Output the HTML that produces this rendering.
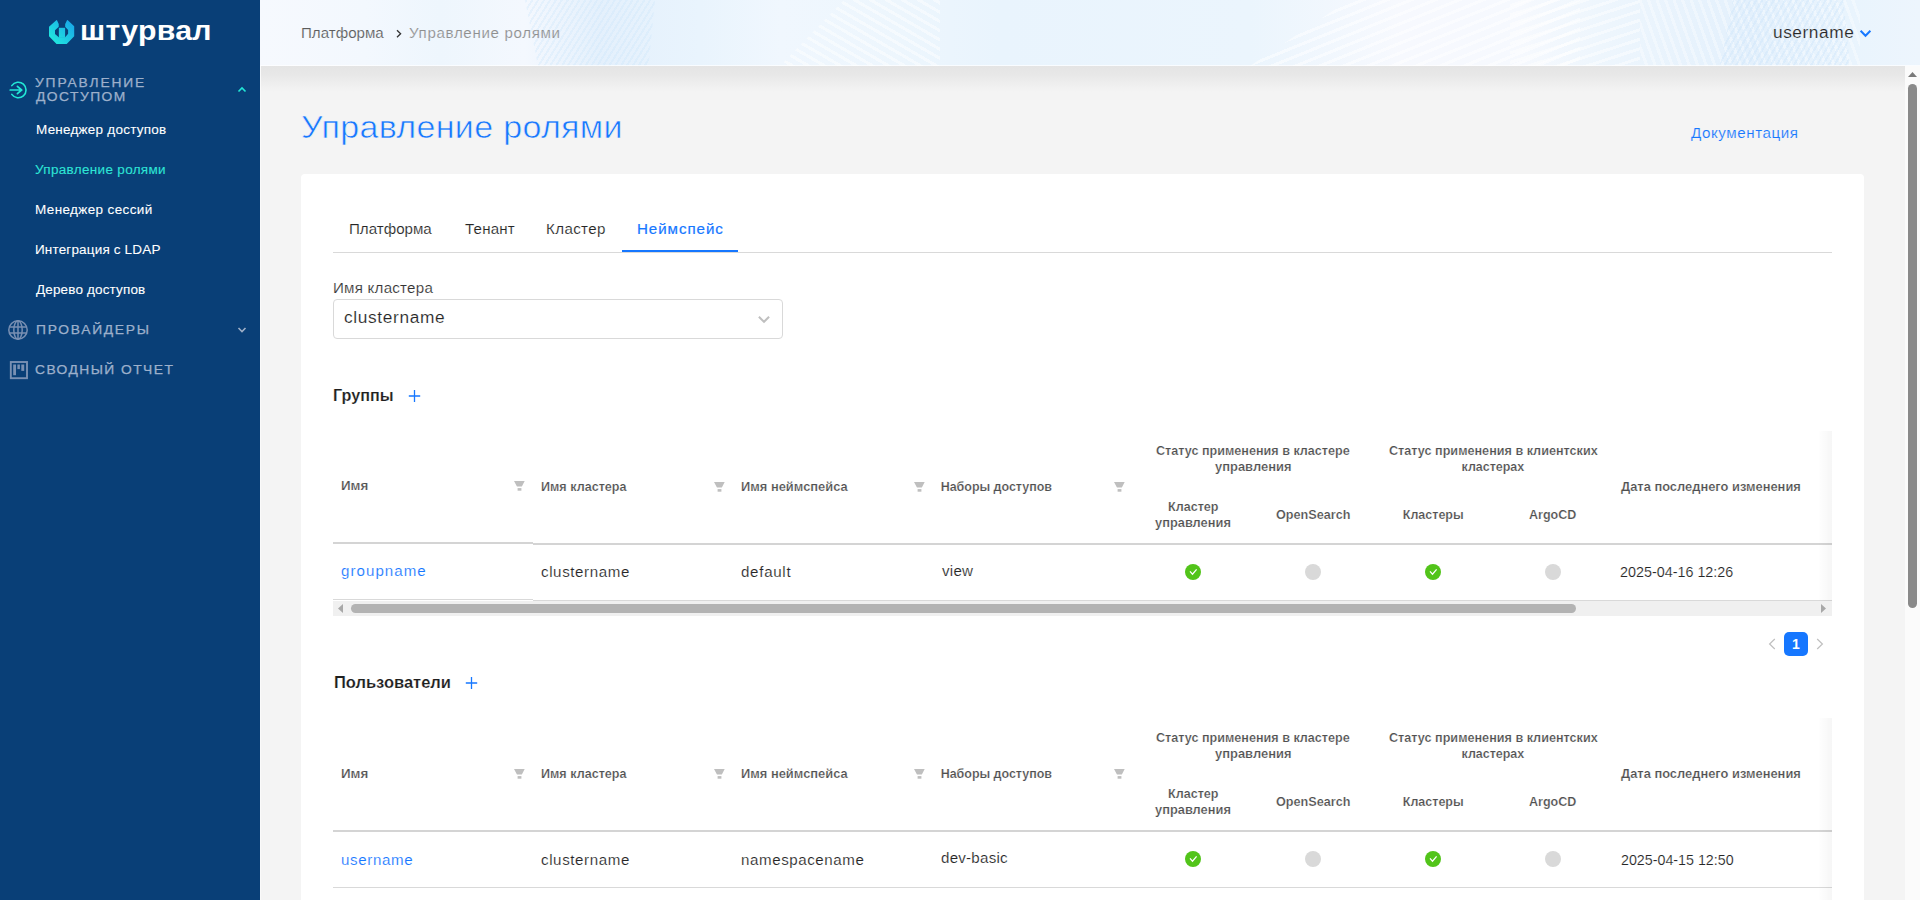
<!DOCTYPE html>
<html><head><meta charset="utf-8"><title>Управление ролями</title>
<style>
html,body{margin:0;padding:0;width:1920px;height:900px;overflow:hidden;background:#f4f4f4}
body{position:relative;font-family:"Liberation Sans",sans-serif}
.a{position:absolute}
.t{position:absolute;white-space:nowrap;line-height:1;transform-origin:0 0}
#side{position:absolute;left:0;top:0;width:260px;height:900px;background:#093f77}
#hdr{position:absolute;left:260px;top:0;width:1660px;height:66px;background:linear-gradient(90deg,#f4f9fe 0%,#eaf5fd 35%,#eef6fd 55%,#f6f9fe 72%,#ecf5fd 100%);overflow:hidden}
#shadow{position:absolute;left:260px;top:66px;width:1645px;height:26px;background:linear-gradient(#e4e4e4,#e8e8e8 35%,#f4f4f4)}
#card{position:absolute;left:301px;top:174px;width:1563px;height:760px;background:#fff;border-radius:4px}
#vs{position:absolute;left:1905px;top:66px;width:15px;height:834px;background:#fbfbfb}
</style></head><body>
<div id="side"></div>
<div id="hdr" style="background:linear-gradient(90deg,#f6f9fe 0.00%,#f3f8fe 6.33%,#eef6fd 10.84%,#f4f8fe 15.96%,#e4f0fc 20.48%,#e9f4fd 26.51%,#f0f7fe 31.33%,#edf6fd 38.55%,#e9f4fd 44.58%,#ebf5fd 59.64%,#f7f9fe 68.67%,#f6f9fe 75.90%,#eef6fd 80.72%,#e3f0fc 89.76%,#e9f4fd 95.78%,#edf5fd 100.00%)">
 <div class="a" style="left:265px;top:0;width:130px;height:66px;background:repeating-linear-gradient(-58deg,rgba(200,228,250,0) 0 3px,rgba(200,228,250,.30) 3px 5px);clip-path:polygon(0 0,100% 0,95% 100%,10% 100%)"></div>
 <div class="a" style="left:520px;top:0;width:160px;height:66px;background:repeating-linear-gradient(30deg,rgba(255,255,255,0) 0 5px,rgba(255,255,255,.45) 5px 8px);clip-path:polygon(40% 0,100% 0,100% 100%,0 100%)"></div>
 <div class="a" style="left:990px;top:0;width:330px;height:66px;background:repeating-linear-gradient(-22deg,rgba(255,255,255,0) 0 6px,rgba(255,255,255,.5) 6px 9px);clip-path:polygon(30% 0,100% 0,100% 100%,0 100%)"></div>
 <div class="a" style="left:1250px;top:0;width:130px;height:66px;background:repeating-linear-gradient(-18deg,rgba(255,255,255,0) 0 6px,rgba(255,255,255,.45) 6px 9px)"></div>
 <div class="a" style="left:1380px;top:0;width:220px;height:66px;background:repeating-linear-gradient(70deg,rgba(255,255,255,0) 0 5px,rgba(255,255,255,.35) 5px 8px)"></div>
 <div class="a" style="left:1460px;top:0;width:130px;height:66px;background:repeating-linear-gradient(-60deg,rgba(200,226,250,0) 0 3px,rgba(200,226,250,.35) 3px 5px);clip-path:polygon(10% 0,95% 0,100% 100%,0 100%)"></div>
</div>
<div id="shadow"></div>
<div class="a" style="left:260px;top:65px;width:1660px;height:1px;background:rgba(255,255,255,.7)"></div>
<div class="a" style="left:260px;top:66px;width:1px;height:834px;background:#fafafa"></div>
<div id="card"></div>
<div id="vs"></div>
<svg class="a" style="left:1907px;top:71px" width="11" height="7" viewBox="0 0 11 7"><path d="M1 6H10L5.5 1Z" fill="#7a7a7a"/></svg>
<div class="a" style="left:1908px;top:84px;width:9px;height:524px;border-radius:4.5px;background:#8a8a8a"></div>

<!-- logo -->
<svg class="a" style="left:49px;top:20px" width="26" height="24" viewBox="0 0 26 24">
<defs><linearGradient id="lg" gradientUnits="userSpaceOnUse" x1="0" y1="24" x2="25" y2="0"><stop offset="0" stop-color="#22f2dc"/><stop offset="1" stop-color="#18a0ea"/></linearGradient></defs>
<path d="M7.3 0.2Q7.6 -0.2 8 0.2L9.85 4.2V6.7H16.1V4.2L18 0.2Q18.4 -0.2 18.8 0.2L25.2 6.3V16.3L17.7 24H7.5L0 16.3V6.7Z" fill="url(#lg)"/>
<path d="M9.85 4.2H16.1V6.7L19.1 10V13.8L16.1 17.3H9.85L6 13.9V10.2L9.85 6.7Z" fill="#093f77"/>
<rect x="9.85" y="7.8" width="6.25" height="10" fill="url(#lg)"/>
</svg>
<!-- sidebar icons -->
<svg class="a" style="left:8px;top:80px" width="22" height="22" viewBox="0 0 22 22">
<path d="M3.8 5.6A7.8 7.8 0 1 1 3.8 14.4" stroke="#22e8d6" stroke-width="1.6" fill="none" stroke-linecap="round"/>
<path d="M2.2 10H13.8M9.4 6.3L13.6 10L9.4 13.7" stroke="#22e8d6" stroke-width="1.7" fill="none" stroke-linecap="round" stroke-linejoin="round"/>
</svg>
<svg class="a" style="left:236px;top:84px" width="12" height="10" viewBox="0 0 12 10"><path d="M2.5 7.5L6 4L9.5 7.5" stroke="#22e8d6" stroke-width="1.6" fill="none"/></svg>
<svg class="a" style="left:7px;top:319px" width="22" height="22" viewBox="0 0 22 22">
<g stroke="#7990b3" stroke-width="1.5" fill="none"><circle cx="11" cy="11" r="9.2"/><ellipse cx="11" cy="11" rx="4.2" ry="9.2"/><path d="M11 1.8V20.2M2.2 8H19.8M2.2 14H19.8"/></g>
</svg>
<svg class="a" style="left:236px;top:325px" width="12" height="10" viewBox="0 0 12 10"><path d="M2.5 3L6 6.5L9.5 3" stroke="#9fb0c8" stroke-width="1.6" fill="none"/></svg>
<svg class="a" style="left:9px;top:360px" width="20" height="20" viewBox="0 0 20 20">
<rect x="1.8" y="2" width="16.2" height="16.2" stroke="#7990b3" stroke-width="1.9" fill="none"/>
<rect x="4.2" y="4.5" width="2.8" height="10.7" fill="#7990b3"/><rect x="8.4" y="4.5" width="2.5" height="4.6" fill="#7990b3"/><rect x="12.3" y="4.5" width="2.9" height="6.4" fill="#7990b3"/>
</svg>
<!-- breadcrumb chevron -->
<svg class="a" style="left:394px;top:28px" width="10" height="12" viewBox="0 0 10 12"><path d="M3 2.3L6.6 5.8L3 9.3" stroke="#333" stroke-width="1.3" fill="none"/></svg>
<!-- user chevron -->
<svg class="a" style="left:1858px;top:28px" width="15" height="11" viewBox="0 0 15 11"><path d="M2.6 2.8L7.5 7.8L12.4 2.8" stroke="#1677ff" stroke-width="2" fill="none"/></svg>
<!-- tabs -->
<div class="a" style="left:333px;top:252px;width:1499px;height:1px;background:#d9d9d9"></div>
<div class="a" style="left:622px;top:250px;width:116px;height:2px;background:#1677ff"></div>
<!-- select -->
<div class="a" style="left:333px;top:299px;width:448px;height:38px;border:1px solid #d9d9d9;border-radius:4px;background:#fff"></div>
<svg class="a" style="left:756px;top:313px" width="16" height="12" viewBox="0 0 16 12"><path d="M2.9 3.7L8 8.8L13.1 3.7" stroke="#bfbfbf" stroke-width="2" fill="none"/></svg>
<!-- plus icons -->
<svg class="a" style="left:408px;top:389px" width="13" height="14" viewBox="0 0 13 14"><path d="M6.5 1V13M0.8 7H12.2" stroke="#1677ff" stroke-width="1.3"/></svg>
<svg class="a" style="left:465px;top:676px" width="13" height="14" viewBox="0 0 13 14"><path d="M6.5 1V13M0.8 7H12.2" stroke="#1677ff" stroke-width="1.3"/></svg>
<div class="a" style="left:333px;top:542px;width:200px;height:2px;background:#d4d4d4"></div>
<div class="a" style="left:533px;top:543px;width:1299px;height:2px;background:#d4d4d4"></div>
<div class="a" style="left:333px;top:599px;width:200px;height:1px;background:#d9d9d9"></div>
<div class="a" style="left:533px;top:600px;width:1299px;height:1px;background:#d9d9d9"></div>
<svg class="a" style="left:513.5px;top:481px" width="11" height="10" viewBox="0 0 11 10"><path d="M0 0H10.7L8 5.2Q7.8 5.6 7.4 5.6H3.4Q3 5.6 2.8 5.2Z" fill="#bfbfbf"/><rect x="3.6" y="7.1" width="3.8" height="2.6" fill="#bfbfbf"/></svg>
<svg class="a" style="left:713.5px;top:482px" width="11" height="10" viewBox="0 0 11 10"><path d="M0 0H10.7L8 5.2Q7.8 5.6 7.4 5.6H3.4Q3 5.6 2.8 5.2Z" fill="#bfbfbf"/><rect x="3.6" y="7.1" width="3.8" height="2.6" fill="#bfbfbf"/></svg>
<svg class="a" style="left:913.5px;top:482px" width="11" height="10" viewBox="0 0 11 10"><path d="M0 0H10.7L8 5.2Q7.8 5.6 7.4 5.6H3.4Q3 5.6 2.8 5.2Z" fill="#bfbfbf"/><rect x="3.6" y="7.1" width="3.8" height="2.6" fill="#bfbfbf"/></svg>
<svg class="a" style="left:1113.5px;top:482px" width="11" height="10" viewBox="0 0 11 10"><path d="M0 0H10.7L8 5.2Q7.8 5.6 7.4 5.6H3.4Q3 5.6 2.8 5.2Z" fill="#bfbfbf"/><rect x="3.6" y="7.1" width="3.8" height="2.6" fill="#bfbfbf"/></svg>
<svg class="a" style="left:1185px;top:564px" width="16" height="16" viewBox="0 0 16 16"><circle cx="8" cy="8" r="8" fill="#52c41a"/><path d="M5 7.4L7.5 10.2L11.6 5.3" stroke="#fff" stroke-width="1.25" fill="none"/></svg>
<svg class="a" style="left:1425px;top:564px" width="16" height="16" viewBox="0 0 16 16"><circle cx="8" cy="8" r="8" fill="#52c41a"/><path d="M5 7.4L7.5 10.2L11.6 5.3" stroke="#fff" stroke-width="1.25" fill="none"/></svg>
<div class="a" style="left:1305px;top:564px;width:16px;height:16px;border-radius:50%;background:#d9d9d9"></div>
<div class="a" style="left:1545px;top:564px;width:16px;height:16px;border-radius:50%;background:#d9d9d9"></div>
<div class="a" style="left:1818px;top:431px;width:14px;height:185px;background:linear-gradient(to right,rgba(0,0,0,0),rgba(0,0,0,0.035))"></div>
<div class="a" style="left:333px;top:601px;width:1499px;height:15px;background:#f0f0f0"></div>
<svg class="a" style="left:337px;top:603px" width="7" height="11" viewBox="0 0 7 11"><path d="M6 1V10L1 5.5Z" fill="#a8a8a8"/></svg>
<svg class="a" style="left:1820px;top:603px" width="7" height="11" viewBox="0 0 7 11"><path d="M1 1V10L6 5.5Z" fill="#a8a8a8"/></svg>
<div class="a" style="left:351px;top:604px;width:1225px;height:9px;border-radius:4.5px;background:#b3b3b3"></div>
<div class="a" style="left:333px;top:830px;width:1499px;height:2px;background:#d4d4d4"></div>
<div class="a" style="left:333px;top:887px;width:1499px;height:1px;background:#d9d9d9"></div>
<svg class="a" style="left:513.5px;top:769px" width="11" height="10" viewBox="0 0 11 10"><path d="M0 0H10.7L8 5.2Q7.8 5.6 7.4 5.6H3.4Q3 5.6 2.8 5.2Z" fill="#bfbfbf"/><rect x="3.6" y="7.1" width="3.8" height="2.6" fill="#bfbfbf"/></svg>
<svg class="a" style="left:713.5px;top:769px" width="11" height="10" viewBox="0 0 11 10"><path d="M0 0H10.7L8 5.2Q7.8 5.6 7.4 5.6H3.4Q3 5.6 2.8 5.2Z" fill="#bfbfbf"/><rect x="3.6" y="7.1" width="3.8" height="2.6" fill="#bfbfbf"/></svg>
<svg class="a" style="left:913.5px;top:769px" width="11" height="10" viewBox="0 0 11 10"><path d="M0 0H10.7L8 5.2Q7.8 5.6 7.4 5.6H3.4Q3 5.6 2.8 5.2Z" fill="#bfbfbf"/><rect x="3.6" y="7.1" width="3.8" height="2.6" fill="#bfbfbf"/></svg>
<svg class="a" style="left:1113.5px;top:769px" width="11" height="10" viewBox="0 0 11 10"><path d="M0 0H10.7L8 5.2Q7.8 5.6 7.4 5.6H3.4Q3 5.6 2.8 5.2Z" fill="#bfbfbf"/><rect x="3.6" y="7.1" width="3.8" height="2.6" fill="#bfbfbf"/></svg>
<svg class="a" style="left:1185px;top:851px" width="16" height="16" viewBox="0 0 16 16"><circle cx="8" cy="8" r="8" fill="#52c41a"/><path d="M5 7.4L7.5 10.2L11.6 5.3" stroke="#fff" stroke-width="1.25" fill="none"/></svg>
<svg class="a" style="left:1425px;top:851px" width="16" height="16" viewBox="0 0 16 16"><circle cx="8" cy="8" r="8" fill="#52c41a"/><path d="M5 7.4L7.5 10.2L11.6 5.3" stroke="#fff" stroke-width="1.25" fill="none"/></svg>
<div class="a" style="left:1305px;top:851px;width:16px;height:16px;border-radius:50%;background:#d9d9d9"></div>
<div class="a" style="left:1545px;top:851px;width:16px;height:16px;border-radius:50%;background:#d9d9d9"></div>
<div class="a" style="left:1818px;top:718px;width:14px;height:182px;background:linear-gradient(to right,rgba(0,0,0,0),rgba(0,0,0,0.035))"></div>
<!-- pagination -->
<svg class="a" style="left:1766px;top:637px" width="12" height="14" viewBox="0 0 12 14"><path d="M8.8 2L3.6 7L8.8 12" stroke="#bfbfbf" stroke-width="1.2" fill="none"/></svg>
<div class="a" style="left:1784px;top:632px;width:24px;height:24px;border-radius:5px;background:#1677ff;color:#fff;font-weight:bold;font-size:14px;line-height:24px;text-align:center">1</div>
<svg class="a" style="left:1814px;top:637px" width="12" height="14" viewBox="0 0 12 14"><path d="M3.2 2L8.4 7L3.2 12" stroke="#bfbfbf" stroke-width="1.2" fill="none"/></svg>
<div class="t" style="left:80.4px;top:17.0px;font-size:28px;font-weight:bold;letter-spacing:0.253px;color:#ffffff;transform:scaleX(1.0800)">штурвал</div>
<div class="t" style="left:34.9px;top:77.0px;font-size:12px;font-weight:normal;letter-spacing:1.609px;color:#9db0cb;-webkit-text-stroke:0.25px #9db0cb;transform:scaleX(1.1500)">УПРАВЛЕНИЕ</div>
<div class="t" style="left:36.0px;top:91.0px;font-size:12px;font-weight:normal;letter-spacing:1.292px;color:#9db0cb;-webkit-text-stroke:0.25px #9db0cb;transform:scaleX(1.1500)">ДОСТУПОМ</div>
<div class="t" style="left:35.5px;top:124.0px;font-size:12.5px;font-weight:normal;letter-spacing:0.215px;color:#ffffff;-webkit-text-stroke:0.08px #ffffff;transform:scaleX(1.0800)">Менеджер доступов</div>
<div class="t" style="left:35.1px;top:164.0px;font-size:12.5px;font-weight:normal;letter-spacing:0.295px;color:#2ee6d6;-webkit-text-stroke:0.08px #2ee6d6;transform:scaleX(1.0800)">Управление ролями</div>
<div class="t" style="left:35.3px;top:204.0px;font-size:12.5px;font-weight:normal;letter-spacing:0.340px;color:#ffffff;-webkit-text-stroke:0.08px #ffffff;transform:scaleX(1.0800)">Менеджер сессий</div>
<div class="t" style="left:35.3px;top:244.0px;font-size:12.5px;font-weight:normal;letter-spacing:0.153px;color:#ffffff;-webkit-text-stroke:0.08px #ffffff;transform:scaleX(1.0800)">Интеграция с LDAP</div>
<div class="t" style="left:36.0px;top:284.0px;font-size:12.5px;font-weight:normal;letter-spacing:0.138px;color:#ffffff;-webkit-text-stroke:0.08px #ffffff;transform:scaleX(1.0800)">Дерево доступов</div>
<div class="t" style="left:35.5px;top:324.0px;font-size:12px;font-weight:normal;letter-spacing:1.502px;color:#9db0cb;-webkit-text-stroke:0.25px #9db0cb;transform:scaleX(1.1500)">ПРОВАЙДЕРЫ</div>
<div class="t" style="left:34.9px;top:364.0px;font-size:12px;font-weight:normal;letter-spacing:1.261px;color:#9db0cb;-webkit-text-stroke:0.25px #9db0cb;transform:scaleX(1.1500)">СВОДНЫЙ ОТЧЕТ</div>
<div class="t" style="left:301.3px;top:26.0px;font-size:14px;font-weight:normal;letter-spacing:0.002px;color:#5c5c5c;-webkit-text-stroke:0.15px #eef5fd;transform:scaleX(1.0800)">Платформа</div>
<div class="t" style="left:408.5px;top:26.0px;font-size:14px;font-weight:normal;letter-spacing:0.605px;color:#8f8f8f;-webkit-text-stroke:0.15px #eef5fd;transform:scaleX(1.0800)">Управление ролями</div>
<div class="t" style="left:1773.2px;top:24.6px;font-size:16px;font-weight:normal;letter-spacing:0.516px;color:#262626;-webkit-text-stroke:0.15px #eef5fd;transform:scaleX(1.0800)">username</div>
<div class="t" style="left:301.3px;top:112.4px;font-size:31.5px;font-weight:normal;letter-spacing:0.301px;color:#1677ff;-webkit-text-stroke:0.6px #f4f4f4;transform:scaleX(1.0800)">Управление ролями</div>
<div class="t" style="left:1690.8px;top:125.7px;font-size:14px;font-weight:normal;letter-spacing:0.542px;color:#1677ff;-webkit-text-stroke:0.15px #f4f4f4;transform:scaleX(1.0800)">Документация</div>
<div class="t" style="left:349.1px;top:222.3px;font-size:14px;font-weight:normal;letter-spacing:0.002px;color:#262626;-webkit-text-stroke:0.15px #fff;transform:scaleX(1.0800)">Платформа</div>
<div class="t" style="left:464.8px;top:222.3px;font-size:14px;font-weight:normal;letter-spacing:0.167px;color:#262626;-webkit-text-stroke:0.15px #fff;transform:scaleX(1.0800)">Тенант</div>
<div class="t" style="left:545.8px;top:222.3px;font-size:14px;font-weight:normal;letter-spacing:0.346px;color:#262626;-webkit-text-stroke:0.15px #fff;transform:scaleX(1.0800)">Кластер</div>
<div class="t" style="left:636.9px;top:222.3px;font-size:14px;font-weight:normal;letter-spacing:0.870px;color:#1677ff;-webkit-text-stroke:0.2px #1677ff;transform:scaleX(1.0800)">Неймспейс</div>
<div class="t" style="left:333.2px;top:281.0px;font-size:14px;font-weight:normal;letter-spacing:0.217px;color:#333333;-webkit-text-stroke:0.15px #fff;transform:scaleX(1.0800)">Имя кластера</div>
<div class="t" style="left:343.6px;top:310.0px;font-size:16px;font-weight:normal;letter-spacing:0.604px;color:#262626;-webkit-text-stroke:0.15px #fff;transform:scaleX(1.0800)">clustername</div>
<div class="t" style="left:333.4px;top:387.8px;font-size:16px;font-weight:bold;letter-spacing:0.000px;color:#1f1f1f;-webkit-text-stroke:0.15px #fff;transform:scaleX(1.0121)">Группы</div>
<div class="t" style="left:333.6px;top:675.0px;font-size:16px;font-weight:bold;letter-spacing:0.000px;color:#1f1f1f;-webkit-text-stroke:0.15px #fff;transform:scaleX(1.0304)">Пользователи</div>
<div class="t" style="left:340.5px;top:480.0px;font-size:12.5px;font-weight:bold;letter-spacing:0.000px;color:#505050;-webkit-text-stroke:0.2px #fff;transform:scaleX(1.0708)">Имя</div>
<div class="t" style="left:540.7px;top:481.0px;font-size:12.5px;font-weight:bold;letter-spacing:0.000px;color:#505050;-webkit-text-stroke:0.2px #fff;transform:scaleX(1.0071)">Имя кластера</div>
<div class="t" style="left:740.9px;top:481.0px;font-size:12.5px;font-weight:bold;letter-spacing:0.000px;color:#505050;-webkit-text-stroke:0.2px #fff;transform:scaleX(1.0311)">Имя неймспейса</div>
<div class="t" style="left:940.7px;top:481.0px;font-size:12.5px;font-weight:bold;letter-spacing:-0.029px;color:#505050;-webkit-text-stroke:0.2px #fff;transform:scaleX(1.0000)">Наборы доступов</div>
<div class="t" style="left:1156.3px;top:445.0px;font-size:12.5px;font-weight:bold;letter-spacing:0.000px;color:#505050;-webkit-text-stroke:0.2px #fff;transform:scaleX(1.0078)">Статус применения в кластере</div>
<div class="t" style="left:1215.0px;top:461.2px;font-size:12.5px;font-weight:bold;letter-spacing:0.000px;color:#505050;-webkit-text-stroke:0.2px #fff;transform:scaleX(1.0356)">управления</div>
<div class="t" style="left:1388.8px;top:445.0px;font-size:12.5px;font-weight:bold;letter-spacing:0.000px;color:#505050;-webkit-text-stroke:0.2px #fff;transform:scaleX(1.0097)">Статус применения в клиентских</div>
<div class="t" style="left:1461.5px;top:461.2px;font-size:12.5px;font-weight:bold;letter-spacing:-0.013px;color:#505050;-webkit-text-stroke:0.2px #fff;transform:scaleX(1.0000)">кластерах</div>
<div class="t" style="left:1167.8px;top:501.0px;font-size:12.5px;font-weight:bold;letter-spacing:0.000px;color:#505050;-webkit-text-stroke:0.2px #fff;transform:scaleX(1.0061)">Кластер</div>
<div class="t" style="left:1155.3px;top:517.0px;font-size:12.5px;font-weight:bold;letter-spacing:-0.000px;color:#505050;-webkit-text-stroke:0.2px #fff;transform:scaleX(1.0274)">управления</div>
<div class="t" style="left:1276.0px;top:508.8px;font-size:12.5px;font-weight:bold;letter-spacing:0.000px;color:#505050;-webkit-text-stroke:0.2px #fff;transform:scaleX(1.0110)">OpenSearch</div>
<div class="t" style="left:1402.8px;top:508.8px;font-size:12.5px;font-weight:bold;letter-spacing:0.000px;color:#505050;-webkit-text-stroke:0.2px #fff;transform:scaleX(1.0000)">Кластеры</div>
<div class="t" style="left:1529.4px;top:508.8px;font-size:12.5px;font-weight:bold;letter-spacing:0.000px;color:#505050;-webkit-text-stroke:0.2px #fff;transform:scaleX(1.0021)">ArgoCD</div>
<div class="t" style="left:1621.0px;top:481.0px;font-size:12.5px;font-weight:bold;letter-spacing:0.000px;color:#505050;-webkit-text-stroke:0.2px #fff;transform:scaleX(1.0305)">Дата последнего изменения</div>
<div class="t" style="left:340.5px;top:768.0px;font-size:12.5px;font-weight:bold;letter-spacing:0.000px;color:#505050;-webkit-text-stroke:0.2px #fff;transform:scaleX(1.0708)">Имя</div>
<div class="t" style="left:540.7px;top:768.0px;font-size:12.5px;font-weight:bold;letter-spacing:0.000px;color:#505050;-webkit-text-stroke:0.2px #fff;transform:scaleX(1.0071)">Имя кластера</div>
<div class="t" style="left:740.9px;top:768.0px;font-size:12.5px;font-weight:bold;letter-spacing:0.000px;color:#505050;-webkit-text-stroke:0.2px #fff;transform:scaleX(1.0311)">Имя неймспейса</div>
<div class="t" style="left:940.7px;top:768.0px;font-size:12.5px;font-weight:bold;letter-spacing:-0.029px;color:#505050;-webkit-text-stroke:0.2px #fff;transform:scaleX(1.0000)">Наборы доступов</div>
<div class="t" style="left:1156.3px;top:732.0px;font-size:12.5px;font-weight:bold;letter-spacing:0.000px;color:#505050;-webkit-text-stroke:0.2px #fff;transform:scaleX(1.0078)">Статус применения в кластере</div>
<div class="t" style="left:1215.0px;top:748.2px;font-size:12.5px;font-weight:bold;letter-spacing:0.000px;color:#505050;-webkit-text-stroke:0.2px #fff;transform:scaleX(1.0356)">управления</div>
<div class="t" style="left:1388.8px;top:732.0px;font-size:12.5px;font-weight:bold;letter-spacing:0.000px;color:#505050;-webkit-text-stroke:0.2px #fff;transform:scaleX(1.0097)">Статус применения в клиентских</div>
<div class="t" style="left:1461.5px;top:748.2px;font-size:12.5px;font-weight:bold;letter-spacing:-0.013px;color:#505050;-webkit-text-stroke:0.2px #fff;transform:scaleX(1.0000)">кластерах</div>
<div class="t" style="left:1167.8px;top:788.0px;font-size:12.5px;font-weight:bold;letter-spacing:0.000px;color:#505050;-webkit-text-stroke:0.2px #fff;transform:scaleX(1.0061)">Кластер</div>
<div class="t" style="left:1155.3px;top:804.0px;font-size:12.5px;font-weight:bold;letter-spacing:-0.000px;color:#505050;-webkit-text-stroke:0.2px #fff;transform:scaleX(1.0274)">управления</div>
<div class="t" style="left:1276.0px;top:795.8px;font-size:12.5px;font-weight:bold;letter-spacing:0.000px;color:#505050;-webkit-text-stroke:0.2px #fff;transform:scaleX(1.0110)">OpenSearch</div>
<div class="t" style="left:1402.8px;top:795.8px;font-size:12.5px;font-weight:bold;letter-spacing:0.000px;color:#505050;-webkit-text-stroke:0.2px #fff;transform:scaleX(1.0000)">Кластеры</div>
<div class="t" style="left:1529.4px;top:795.8px;font-size:12.5px;font-weight:bold;letter-spacing:0.000px;color:#505050;-webkit-text-stroke:0.2px #fff;transform:scaleX(1.0021)">ArgoCD</div>
<div class="t" style="left:1621.0px;top:768.0px;font-size:12.5px;font-weight:bold;letter-spacing:0.000px;color:#505050;-webkit-text-stroke:0.2px #fff;transform:scaleX(1.0305)">Дата последнего изменения</div>
<div class="t" style="left:340.5px;top:564.0px;font-size:14px;font-weight:normal;letter-spacing:0.958px;color:#1677ff;-webkit-text-stroke:0.15px #fff;transform:scaleX(1.0800)">groupname</div>
<div class="t" style="left:540.6px;top:564.7px;font-size:14px;font-weight:normal;letter-spacing:0.556px;color:#262626;-webkit-text-stroke:0.15px #fff;transform:scaleX(1.0800)">clustername</div>
<div class="t" style="left:740.9px;top:564.7px;font-size:14px;font-weight:normal;letter-spacing:0.651px;color:#262626;-webkit-text-stroke:0.15px #fff;transform:scaleX(1.0800)">default</div>
<div class="t" style="left:941.6px;top:563.7px;font-size:14px;font-weight:normal;letter-spacing:0.235px;color:#262626;-webkit-text-stroke:0.15px #fff;transform:scaleX(1.0800)">view</div>
<div class="t" style="left:1620.0px;top:564.7px;font-size:14px;font-weight:normal;letter-spacing:0.000px;color:#262626;-webkit-text-stroke:0.15px #fff;transform:scaleX(1.0248)">2025-04-16 12:26</div>
<div class="t" style="left:340.5px;top:853.0px;font-size:14px;font-weight:normal;letter-spacing:0.585px;color:#1677ff;-webkit-text-stroke:0.15px #fff;transform:scaleX(1.0800)">username</div>
<div class="t" style="left:540.6px;top:853.0px;font-size:14px;font-weight:normal;letter-spacing:0.556px;color:#262626;-webkit-text-stroke:0.15px #fff;transform:scaleX(1.0800)">clustername</div>
<div class="t" style="left:740.9px;top:853.0px;font-size:14px;font-weight:normal;letter-spacing:0.534px;color:#262626;-webkit-text-stroke:0.15px #fff;transform:scaleX(1.0800)">namespacename</div>
<div class="t" style="left:940.5px;top:851.1px;font-size:14px;font-weight:normal;letter-spacing:0.218px;color:#262626;-webkit-text-stroke:0.15px #fff;transform:scaleX(1.0800)">dev-basic</div>
<div class="t" style="left:1620.5px;top:852.8px;font-size:14px;font-weight:normal;letter-spacing:0.000px;color:#262626;-webkit-text-stroke:0.15px #fff;transform:scaleX(1.0183)">2025-04-15 12:50</div>
</body></html>
